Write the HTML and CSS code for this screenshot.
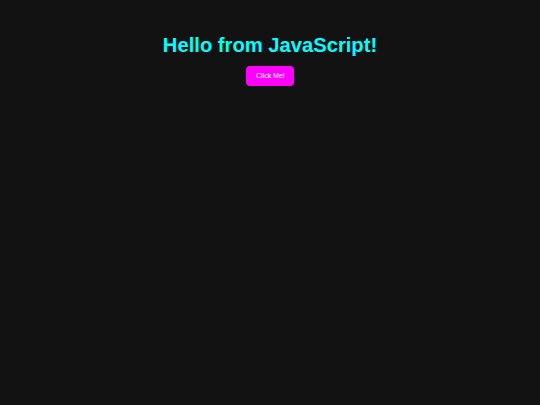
FILE: index.html
```html
<!DOCTYPE html>
<html>
<head>
<meta charset="utf-8">
<link rel="stylesheet" href="styles.css">
</head>
<body>
<main class="page">
  <h1 class="title">Hello from JavaScript!</h1>
  <button class="btn">Click Me!</button>
</main>
</body>
</html>
```
FILE: styles.css
```css
html, body {
  margin: 0;
  padding: 0;
  background: #121212;
  height: 100%;
}
.page {
  display: flex;
  flex-direction: column;
  align-items: center;
  padding-top: 34px;
  font-family: "Liberation Sans", Arial, sans-serif;
}
.title {
  margin: 0;
  font-size: 20.2px;
  font-weight: bold;
  color: #00ffff;
  line-height: 23px;
}
.btn {
  box-sizing: border-box;
  margin-top: 9px;
  background: #ff00ff;
  color: #ffffff;
  border: none;
  border-radius: 4px;
  font-family: "Liberation Sans", Arial, sans-serif;
  font-size: 7px;
  line-height: 8px;
  padding: 5px 10px;
  height: 20px;
  width: 48px;
  white-space: nowrap;
}
```
